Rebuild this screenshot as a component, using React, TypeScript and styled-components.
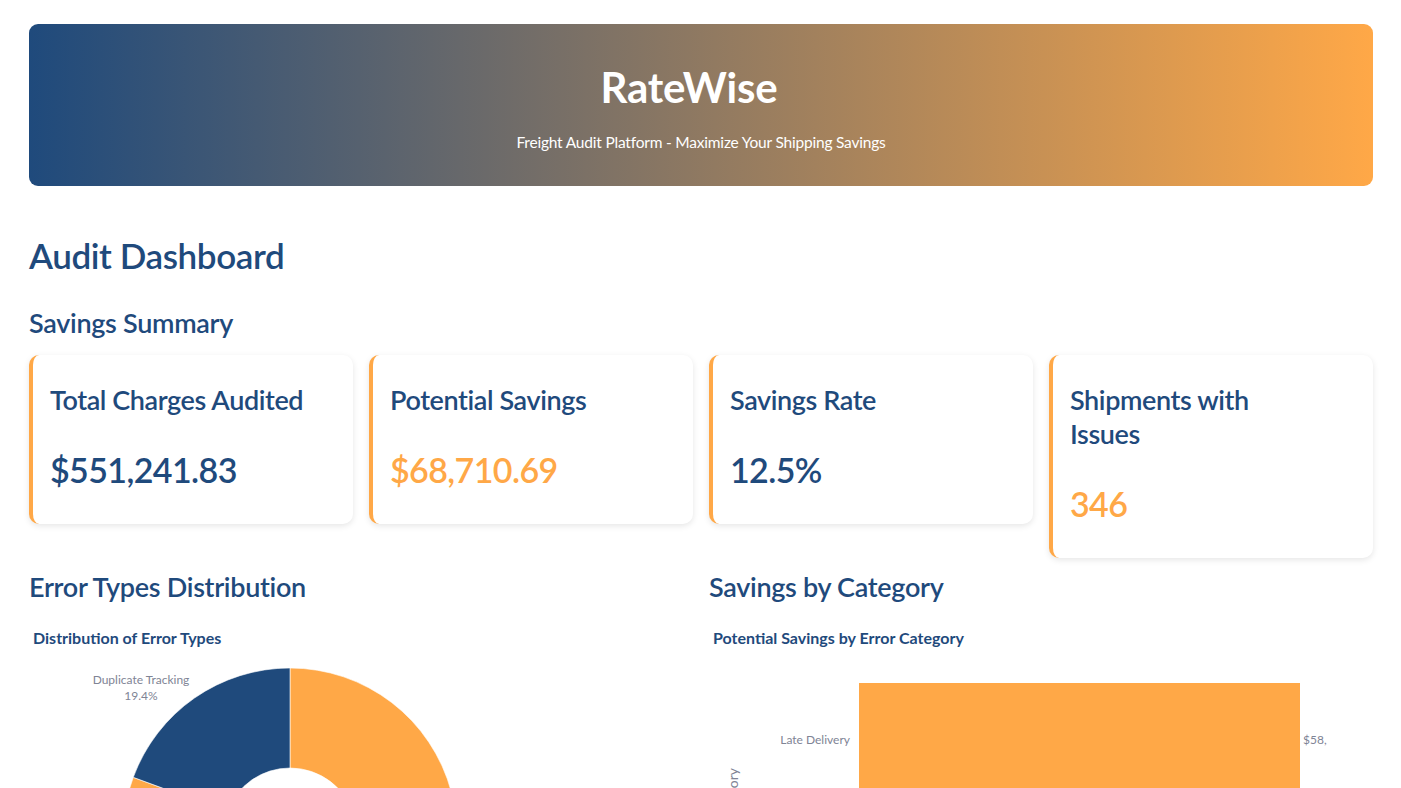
import React from "react";
import styled, { createGlobalStyle } from "styled-components";

const NAVY = "#1f4a7c";
const ORANGE = "#ffa847";
const AXIS = "#808495";

const GlobalStyle = createGlobalStyle`
  html, body { margin: 0; padding: 0; background: #ffffff; }
  body { font-family: Lato, "Noto Sans", Arial, sans-serif; color: ${NAVY}; }
  * { box-sizing: border-box; }
`;

const Page = styled.main`
  padding: 24px 28px 0 29px;
  display: flex;
  flex-direction: column;
`;

const Hero = styled.header`
  height: 162px;
  border-radius: 9px;
  background: linear-gradient(90deg, ${NAVY} 0%, ${ORANGE} 100%);
  color: #ffffff;
  display: flex;
  flex-direction: column;
  align-items: center;
  padding-top: 38px;
`;

const HeroTitle = styled.h1`
  margin: 0 24px 0 0;
  font-size: 42px;
  line-height: 50px;
  font-weight: 700;
  letter-spacing: -0.2px;
`;

const HeroSubtitle = styled.p`
  margin: 20px 0 0;
  font-size: 15.5px;
  line-height: 20px;
  letter-spacing: -0.2px;
`;

const PageTitle = styled.h2`
  margin: 47px 0 0;
  font-size: 35px;
  line-height: 44px;
  font-weight: 600;
  color: ${NAVY};
  letter-spacing: -0.4px;
`;

const SectionTitle = styled.h3<{ $top: number }>`
  margin: ${(p) => p.$top}px 0 0;
  font-size: 27px;
  line-height: 36px;
  font-weight: 600;
  color: ${NAVY};
  letter-spacing: -0.3px;
`;

const CardRow = styled.section`
  margin-top: 14px;
  display: grid;
  grid-template-columns: repeat(4, 1fr);
  gap: 16px;
  align-items: start;
`;

const Card = styled.div`
  background: #ffffff;
  border-left: 4px solid ${ORANGE};
  border-radius: 10px;
  box-shadow: 0 2px 6px rgba(0, 0, 0, 0.1);
  padding: 28px 20px 32px 17px;
`;

const CardLabel = styled.div`
  font-size: 27px;
  line-height: 34px;
  font-weight: 600;
  color: ${NAVY};
  letter-spacing: -0.4px;
`;

const CardValue = styled.div<{ $accent?: boolean }>`
  margin-top: 31px;
  font-size: 34px;
  line-height: 44px;
  font-weight: 600;
  color: ${(p) => (p.$accent ? ORANGE : NAVY)};
  letter-spacing: -0.6px;
`;

const ChartRow = styled.section`
  margin-top: 11px;
  display: grid;
  grid-template-columns: 1fr 1fr;
  gap: 16px;
`;

const ChartColumn = styled.div`
  display: flex;
  flex-direction: column;
`;

const ChartTitle = styled.div`
  margin-top: 23px;
  padding-left: 4px;
  font-size: 16px;
  line-height: 20px;
  font-weight: 700;
  color: ${NAVY};
`;

const ChartSvg = styled.svg`
  display: block;
  width: 100%;
  height: 300px;
  overflow: visible;
  font-family: Lato, "Noto Sans", Arial, sans-serif;
`;

function polar(cx: number, cy: number, r: number, deg: number) {
  const a = (deg * Math.PI) / 180;
  return [cx + r * Math.sin(a), cy - r * Math.cos(a)];
}

function slicePath(cx: number, cy: number, R: number, r: number, a0: number, a1: number) {
  const large = a1 - a0 > 180 ? 1 : 0;
  const [x0, y0] = polar(cx, cy, R, a0);
  const [x1, y1] = polar(cx, cy, R, a1);
  const [x2, y2] = polar(cx, cy, r, a1);
  const [x3, y3] = polar(cx, cy, r, a0);
  return `M${x0},${y0} A${R},${R} 0 ${large} 1 ${x1},${y1} L${x2},${y2} A${r},${r} 0 ${large} 0 ${x3},${y3} Z`;
}

const slices = [
  { from: 0, to: 150, color: ORANGE },
  { from: 150, to: 220, color: NAVY },
  { from: 220, to: 290.2, color: ORANGE },
  { from: 290.2, to: 360, color: NAVY },
];

function Donut() {
  const cx = 261;
  const cy = 187;
  return (
    <ChartSvg viewBox="0 0 664 300">
      {slices.map((s, i) => (
        <path key={i} d={slicePath(cx, cy, 167, 67, s.from, s.to)} fill={s.color} stroke="#ffffff" strokeWidth={0.6} />
      ))}
      <text x={112} y={36} fontSize={12} fill={AXIS} textAnchor="middle">Duplicate Tracking</text>
      <text x={112} y={52} fontSize={12} fill={AXIS} textAnchor="middle">19.4%</text>
    </ChartSvg>
  );
}

function Bars() {
  return (
    <ChartSvg viewBox="0 0 664 300">
      <rect x={150} y={35} width={441} height={114} fill={ORANGE} />
      <text x={141} y={96} fontSize={12} fill={AXIS} textAnchor="end">Late Delivery</text>
      <text x={594} y={96} fontSize={12} fill={AXIS}>$58,</text>
      <text transform="translate(29 120) rotate(-90)" fontSize={14} fill={AXIS} textAnchor="end">Error Category</text>
    </ChartSvg>
  );
}

export default function App() {
  return (
    <>
      <GlobalStyle />
      <Page>
        <Hero>
          <HeroTitle>RateWise</HeroTitle>
          <HeroSubtitle>Freight Audit Platform - Maximize Your Shipping Savings</HeroSubtitle>
        </Hero>
        <PageTitle>Audit Dashboard</PageTitle>
        <SectionTitle $top={28}>Savings Summary</SectionTitle>
        <CardRow>
          <Card>
            <CardLabel>Total Charges Audited</CardLabel>
            <CardValue>$551,241.83</CardValue>
          </Card>
          <Card>
            <CardLabel>Potential Savings</CardLabel>
            <CardValue $accent>$68,710.69</CardValue>
          </Card>
          <Card>
            <CardLabel>Savings Rate</CardLabel>
            <CardValue>12.5%</CardValue>
          </Card>
          <Card>
            <CardLabel>
              Shipments with
              <br />
              Issues
            </CardLabel>
            <CardValue $accent>346</CardValue>
          </Card>
        </CardRow>
        <ChartRow>
          <ChartColumn>
            <SectionTitle $top={0}>Error Types Distribution</SectionTitle>
            <ChartTitle>Distribution of Error Types</ChartTitle>
            <Donut />
          </ChartColumn>
          <ChartColumn>
            <SectionTitle $top={0}>Savings by Category</SectionTitle>
            <ChartTitle>Potential Savings by Error Category</ChartTitle>
            <Bars />
          </ChartColumn>
        </ChartRow>
      </Page>
    </>
  );
}
